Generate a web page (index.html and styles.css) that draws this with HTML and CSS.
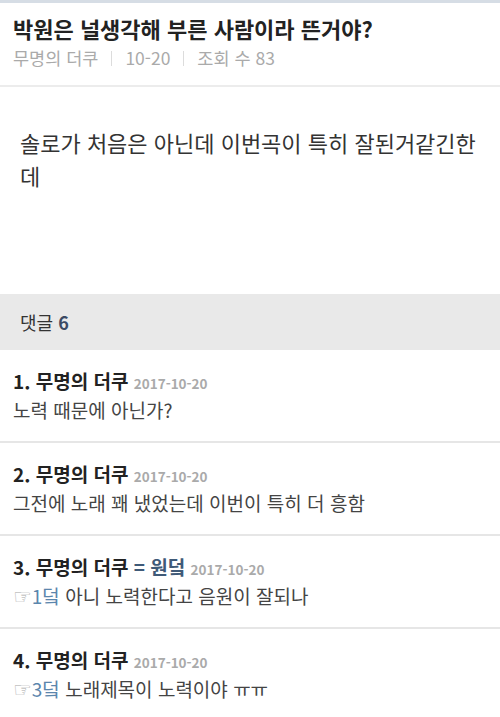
FILE: index.html
```html
<!DOCTYPE html>
<html lang="ko">
<head>
<meta charset="utf-8">
<title>박원은 널생각해 부른 사람이라 뜬거야?</title>
<link rel="stylesheet" href="styles.css">
</head>
<body>
<div class="topbar"></div>
<header class="post-head">
  <h1 class="title">박원은 널생각해 부른 사람이라 뜬거야?</h1>
  <div class="meta">
    <span>무명의 더쿠</span>
    <span class="sep"></span>
    <span>10-20</span>
    <span class="sep"></span>
    <span>조회 수 83</span>
  </div>
</header>
<article class="post-body">솔로가 처음은 아닌데 이번곡이 특히 잘된거같긴한데</article>
<div class="cmt-band">댓글 <b class="count">6</b></div>
<ul class="comments">
  <li class="comment">
    <div class="c-head"><span class="c-name">1. 무명의 더쿠</span> <span class="c-date">2017-10-20</span></div>
    <div class="c-text">노력 때문에 아닌가?</div>
  </li>
  <li class="comment">
    <div class="c-head"><span class="c-name">2. 무명의 더쿠</span> <span class="c-date">2017-10-20</span></div>
    <div class="c-text">그전에 노래 꽤 냈었는데 이번이 특히 더 흥함</div>
  </li>
  <li class="comment">
    <div class="c-head"><span class="c-name">3. 무명의 더쿠</span> <span class="c-op">= 원덬</span> <span class="c-date">2017-10-20</span></div>
    <div class="c-text"><span class="hand">☞</span><span class="ref">1덬</span> 아니 노력한다고 음원이 잘되나</div>
  </li>
  <li class="comment">
    <div class="c-head"><span class="c-name">4. 무명의 더쿠</span> <span class="c-date">2017-10-20</span></div>
    <div class="c-text"><span class="hand">☞</span><span class="ref">3덬</span> 노래제목이 노력이야 ㅠㅠ</div>
  </li>
</ul>
</body>
</html>
```
FILE: styles.css
```css
html, body {
  margin: 0;
  padding: 0;
  background: #ffffff;
}
body {
  font-family: "Noto Sans CJK KR", "Noto Sans", sans-serif;
  color: #333;
  width: 500px;
  overflow: hidden;
}
.topbar {
  height: 3px;
  background: #d6dde5;
}
.post-head {
  padding: 10px 13px 12px;
  border-bottom: 2px solid #ececec;
}
.title {
  margin: 0;
  font-size: 22px;
  line-height: 30px;
  font-weight: 700;
  color: #222;
}
.meta {
  display: flex;
  align-items: center;
  font-size: 17.5px;
  line-height: 30px;
  color: #aaa;
}
.sep {
  width: 1px;
  height: 15px;
  background: #dcdcdc;
  margin: 0 13px;
}
.post-body {
  padding: 39px 15px 102px 20px;
  font-size: 22px;
  line-height: 33px;
  color: #333;
}
.cmt-band {
  height: 56px;
  line-height: 56px;
  padding-left: 20px;
  background: #e9e9e9;
  font-size: 18px;
  color: #333;
}
.count {
  color: #3b4a63;
  font-weight: 700;
}
.comments {
  list-style: none;
  margin: 0;
  padding: 0;
}
.comment {
  padding: 19px 13px 17px;
  border-bottom: 2px solid #e6e6e6;
}
.c-head {
  font-size: 19px;
  line-height: 24px;
  height: 24px;
  white-space: nowrap;
}
.c-name {
  font-weight: 700;
  color: #222;
}
.c-op {
  font-weight: 700;
  color: #3f5a78;
}
.c-date {
  font-size: 13.5px;
  line-height: 1;
  font-weight: 700;
  color: #aaa;
}
.c-text {
  margin-top: 3px;
  font-size: 19px;
  line-height: 28px;
  height: 28px;
  color: #444;
}
.hand {
  font-family: "DejaVu Sans", sans-serif;
  color: #a9a9a9;
  font-size: 21px;
  line-height: 1;
}
.ref {
  color: #5b86ad;
}
```
